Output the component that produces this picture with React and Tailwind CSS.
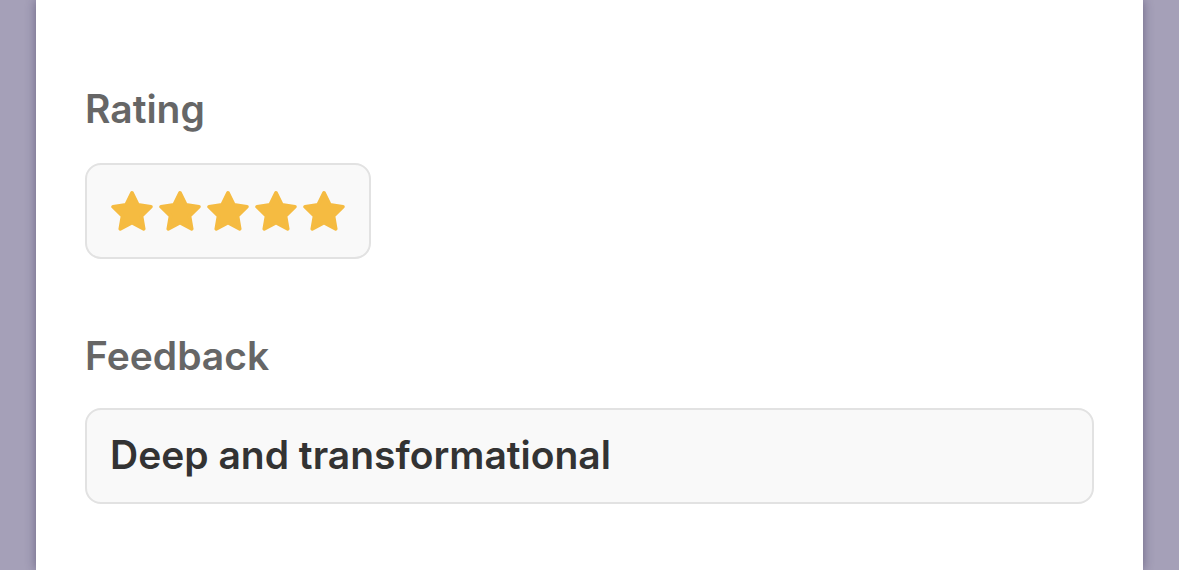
import React from "react";

function StarIcon() {
  return (
    <svg width="42" height="40" viewBox="2.2 2.2 19.6 18.7" fill="#f5bb41" stroke="#f5bb41" strokeWidth="1.7" strokeLinejoin="round">
      <path d="M12 3.1l2.75 5.55 6.1.9-4.42 4.3 1.05 6.08L12 17.05l-5.48 2.88 1.05-6.08-4.42-4.3 6.1-.9z" />
    </svg>
  );
}

export default function App() {
  return (
    <div className="h-[570px] overflow-hidden bg-[#a5a0b8] px-[36px] font-['Inter',sans-serif]">
      <div className="h-full bg-white pl-[49px] pr-[49px] pt-[84px] shadow-[0_0_10px_rgba(40,30,70,0.45)]">
        <div className="text-[39px] font-semibold leading-[50px] text-[#666666]">Rating</div>
        <div className="mt-[29px] inline-flex h-[96px] items-center gap-[6px] rounded-[16px] border-2 border-[#e2e2e2] bg-[#f9f9f9] px-[24px]">
          {[0, 1, 2, 3, 4].map((i) => (
            <StarIcon key={i} />
          ))}
        </div>
        <div className="mt-[72px] text-[39px] font-semibold leading-[50px] text-[#666666]">Feedback</div>
        <div className="mt-[27px] flex h-[96px] items-center rounded-[16px] border-2 border-[#e2e2e2] bg-[#f9f9f9] px-[23px] pb-[2px] text-[39px] font-semibold text-[#333333]">
          Deep and transformational
        </div>
      </div>
    </div>
  );
}
